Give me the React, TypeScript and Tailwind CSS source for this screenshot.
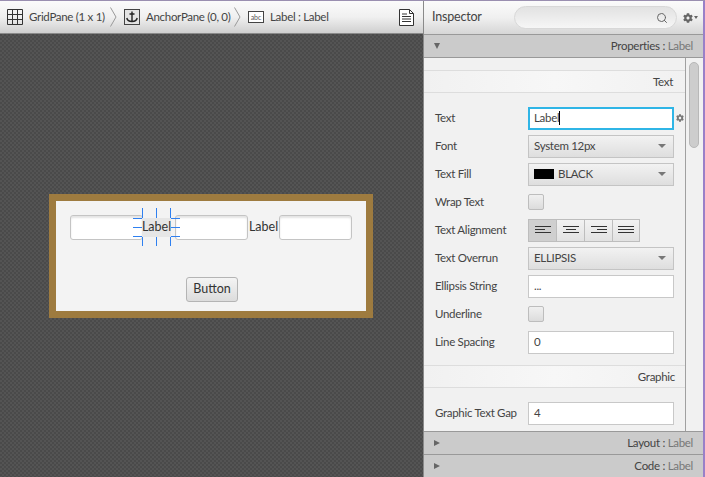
import { Search } from "lucide-react";
import { FaCog } from "react-icons/fa";

const font = "font-['Lato','Liberation_Sans',sans-serif]";
const small = "text-[11.5px] tracking-[-0.3px]";

function GridIcon() {
    return (
        <svg width="16" height="16" viewBox="0 0 16 16" fill="none" stroke="#333" strokeWidth="1" className="shrink-0">
            <path d="M0.5 0.5h15v15h-15z M5.5 0.5v15 M10.5 0.5v15 M0.5 5.5h15 M0.5 10.5h15" />
        </svg>
    );
}

function AnchorIcon() {
    return (
        <div className="w-[16px] h-[16px] border border-[#444] bg-[#e4e4e4] flex items-center justify-center shrink-0">
            <svg width="12" height="12" viewBox="0 0 12 12" fill="none" stroke="#222" strokeWidth="1.4">
                <path d="M6 0.5v10 M3.5 3h5 M0.8 7c0.5 2.5 3 3.5 5.2 3.5s4.700-1 5.200-3.500" />
            </svg>
        </div>
    );
}

function AbcIcon() {
    return (
        <div className="w-[16px] h-[12px] border border-[#444] bg-white flex items-center justify-center shrink-0 text-[7px] tracking-normal leading-none text-[#555]">
            abc
        </div>
    );
}

function Chevron() {
    return (
        <svg width="7" height="20" viewBox="0 0 7 20" fill="none" stroke="#999" strokeWidth="1" className="shrink-0">
            <path d="M0.5 0.500l5.500 9.500-5.500 9.500" />
        </svg>
    );
}

function DocIcon() {
    return (
        <svg width="15" height="17" viewBox="0 0 15 17" fill="#fff" stroke="#333" strokeWidth="1" className="shrink-0">
            <path d="M0.5 0.5h10l4 4v12h-14z" />
            <path d="M10.500 0.500v4h4 M3 5h5 M3 7.500h9 M3 10h9 M3 12.500h9" fill="none" />
        </svg>
    );
}

function CanvasInput() {
    return <div className="w-[73px] h-[25px] rounded-[3px] border border-[#c4c4c4] bg-white shadow-[inset_0_2px_2px_#e4e4e4] shrink-0" />;
}

function SelectionHandles() {
    const line = "absolute bg-[#2f80f0]";
    return (
        <>
            <div className={`${line} left-0 top-[-10px] w-[1px] h-[10px]`} />
            <div className={`${line} left-[14px] top-[-10px] w-[1px] h-[10px]`} />
            <div className={`${line} left-[28px] top-[-10px] w-[1px] h-[10px]`} />
            <div className={`${line} left-0 bottom-[-9px] w-[1px] h-[9px]`} />
            <div className={`${line} left-[14px] bottom-[-9px] w-[1px] h-[9px]`} />
            <div className={`${line} left-[28px] bottom-[-9px] w-[1px] h-[9px]`} />
            <div className={`${line} left-[-9px] top-0 w-[9px] h-[1px]`} />
            <div className={`${line} left-[-9px] top-[9px] w-[9px] h-[1px]`} />
            <div className={`${line} left-[-9px] top-[18px] w-[9px] h-[1px]`} />
            <div className={`${line} right-[-9px] top-0 w-[9px] h-[1px]`} />
            <div className={`${line} right-[-9px] top-[9px] w-[9px] h-[1px]`} />
            <div className={`${line} right-[-9px] top-[18px] w-[9px] h-[1px]`} />
        </>
    );
}

function Row({ label, children, className = "mb-[4px]" }: { label: string; children?: React.ReactNode; className?: string }) {
    return (
        <div className={`flex items-center h-[24px] ${className}`}>
            <div className={`w-[104px] pl-[11px] ${small} text-[#444] shrink-0 whitespace-nowrap`}>{label}</div>
            {children}
        </div>
    );
}

function Select({ children }: { children: React.ReactNode }) {
    return (
        <div className={`w-[146px] h-[23px] border border-[#c4c4c4] bg-gradient-to-b from-[#f2f2f2] to-[#dedede] flex items-center pl-[5px] pr-[7px] ${small} text-[#444]`}>
            <div className="flex-1 flex items-center gap-[4px]">{children}</div>
            <div className="w-0 h-0 border-l-[4px] border-r-[4px] border-t-[4px] border-l-transparent border-r-transparent border-t-[#777]" />
        </div>
    );
}

function TextField({ value }: { value: string }) {
    return (
        <div className={`w-[146px] h-[23px] border border-[#c8c8c8] bg-white flex items-center pl-[5px] ${small} text-[#444]`}>
            {value}
        </div>
    );
}

function Check() {
    return <div className="w-[16px] h-[16px] border border-[#bdbdbd] rounded-[2px] bg-gradient-to-b from-[#f0f0f0] to-[#dcdcdc]" />;
}

function AlignButton({ lines, active }: { lines: [number, number][]; active?: boolean }) {
    return (
        <div className={`w-[28px] h-[23px] border-y border-l border-[#bdbdbd] last:border-r flex items-center justify-center ${active ? "bg-[#cfcfcf]" : "bg-gradient-to-b from-[#f2f2f2] to-[#e2e2e2]"}`}>
            <svg width="18" height="14" viewBox="0 0 18 14" stroke="#333" strokeWidth="1">
                {lines.map(([from, to], i) => {
                    const y = lines.length === 3 ? 3.5 + i * 3 : 2.5 + i * 3;
                    return <line key={i} x1={from} x2={to} y1={y} y2={y} />;
                })}
            </svg>
        </div>
    );
}

function SectionHeader({ title, pr }: { title: string; pr: string }) {
    return (
        <div className={`h-[23px] border-y border-[#dddddd] bg-gradient-to-r from-[#f1f1f1] via-[#f7f7f7] to-[#f1f1f1] flex items-center justify-end ${pr} ${small} text-[#444]`}>
            {title}
        </div>
    );
}

function BarTitle({ open, name }: { open?: boolean; name: string }) {
    return (
        <div className={`h-[23px] bg-[#cbcbcb] border-t border-[#999] flex items-center pl-[10px] pr-[10px] ${small} shrink-0`}>
            {open ? (
                <div className="w-0 h-0 border-l-[3.500px] border-r-[3.500px] border-t-[6px] border-l-transparent border-r-transparent border-t-[#666]" />
            ) : (
                <div className="w-0 h-0 border-t-[3.500px] border-b-[3.500px] border-l-[6px] border-t-transparent border-b-transparent border-l-[#666]" />
            )}
            <div className="ml-auto text-[#444]">
                {name} : <span className="text-[#777]">Label</span>
            </div>
        </div>
    );
}

export default function App() {
    return (
        <div className={`w-[705px] h-[477px] flex overflow-hidden border-t border-[#9a8fb0] ${font}`}>
            <div className="w-[423px] flex flex-col shrink-0">
                <div className={`h-[33px] bg-gradient-to-b from-[#fbfbfb] via-[#f0f0f0] to-[#cfcfcf] border-b border-[#8a8a8a] flex items-center pl-[7px] pr-[9px] ${small} text-[#444] shrink-0 whitespace-nowrap`}>
                    <GridIcon />
                    <span className="ml-[6px] w-[81px]">GridPane (1 x 1)</span>
                    <Chevron />
                    <div className="ml-[7px]"><AnchorIcon /></div>
                    <span className="ml-[6px] w-[88px]">AnchorPane (0, 0)</span>
                    <Chevron />
                    <div className="ml-[7px]"><AbcIcon /></div>
                    <span className="ml-[6px]">Label : Label</span>
                    <div className="ml-auto"><DocIcon /></div>
                </div>
                <div className="flex-1 flex items-center justify-center pr-[1px] bg-[#4f4f4f] bg-[conic-gradient(#545454_25%,#4a4a4a_0_50%,#545454_0_75%,#4a4a4a_0)] bg-[size:4px_4px]">
                    <div className="w-[324px] h-[124px] border-[7px] border-[#9e7b3f] bg-[#f3f3f3] pt-[14px] pl-[14px] flex flex-col">
                        <div className="flex items-center text-[12.5px] text-[#333]">
                            <CanvasInput />
                            <div className="relative w-[29px] h-[19px] -ml-[1px] bg-[#e6e6e6] flex items-center justify-center shrink-0 z-10">
                                Label
                                <SelectionHandles />
                            </div>
                            <div className="ml-[4px]"><CanvasInput /></div>
                            <span className="w-[31px] text-center">Label</span>
                            <CanvasInput />
                        </div>
                        <div className="mt-[37px] ml-[116px] w-[52px] h-[25px] rounded-[3px] border border-[#b4b4b4] bg-gradient-to-b from-[#f4f4f4] to-[#dcdcdc] flex items-center justify-center text-[12.5px] text-[#333]">
                            Button
                        </div>
                    </div>
                </div>
            </div>

            <div className="flex-1 flex flex-col border-l border-[#8a8a8a] border-r-2 border-r-[#9a80c8] bg-[#f1f1f1]">
                <div className="h-[33px] bg-gradient-to-b from-[#fbfbfb] via-[#f0f0f0] to-[#d6d6d6] flex items-center pl-[8px] shrink-0">
                    <span className="w-[82px] text-[12.5px] tracking-[-0.2px] text-[#444]">Inspector</span>
                    <div className="w-[163px] h-[23px] rounded-full border border-[#d8d8d8] bg-gradient-to-b from-[#e2e2e2] to-[#f6f6f6] flex items-center justify-end pr-[8px]">
                        <Search size={12} color="#666" />
                    </div>
                    <div className="ml-[6px] flex items-center gap-[1px]">
                        <FaCog size={10} color="#666" />
                        <div className="w-0 h-0 border-l-[2.500px] border-r-[2.500px] border-t-[3px] border-l-transparent border-r-transparent border-t-[#666]" />
                    </div>
                </div>
                <BarTitle open name="Properties" />
                <div className="flex-1 flex min-h-0 overflow-hidden border-t border-[#999]">
                    <div className="w-[262px] shrink-0 border-r border-[#a0a0a0] overflow-hidden pt-[12px] flex flex-col">
                        <SectionHeader title="Text" pr="pr-[12px]" />
                        <div className="pt-[13px]">
                            <Row label="Text">
                                <div className={`w-[146px] h-[23px] border-2 border-[#2fb5e6] bg-white flex items-center pl-[4px] ${small} text-[#444]`}>
                                    Label<span className="w-[1px] h-[14px] bg-black" />
                                </div>
                                <FaCog size={8} color="#777" className="ml-[2px]" />
                            </Row>
                            <Row label="Font"><Select>System 12px</Select></Row>
                            <Row label="Text Fill">
                                <Select>
                                    <div className="w-[20px] h-[10px] bg-black" />
                                    BLACK
                                </Select>
                            </Row>
                            <Row label="Wrap Text"><Check /></Row>
                            <Row label="Text Alignment">
                                <div className="flex">
                                    <AlignButton active lines={[[1, 17], [1, 11], [1, 17]]} />
                                    <AlignButton lines={[[1, 17], [4, 14], [1, 17]]} />
                                    <AlignButton lines={[[1, 17], [7, 17], [1, 17]]} />
                                    <AlignButton lines={[[1, 17], [1, 17], [1, 17]]} />
                                </div>
                            </Row>
                            <Row label="Text Overrun"><Select>ELLIPSIS</Select></Row>
                            <Row label="Ellipsis String"><TextField value="..." /></Row>
                            <Row label="Underline"><Check /></Row>
                            <Row label="Line Spacing"><TextField value="0" /></Row>
                        </div>
                        <div className="mt-[7px]"><SectionHeader title="Graphic" pr="pr-[10px]" /></div>
                        <div className="pt-[13px]">
                            <Row label="Graphic Text Gap"><TextField value="4" /></Row>
                        </div>
                    </div>
                    <div className="flex-1 pt-[4px] pl-[3px]">
                        <div className="w-[10px] h-[86px] rounded-full border border-[#b8b8b8] bg-[#cdcdcd]" />
                    </div>
                </div>
                <BarTitle name="Layout" />
                <BarTitle name="Code" />
            </div>
        </div>
    );
}
